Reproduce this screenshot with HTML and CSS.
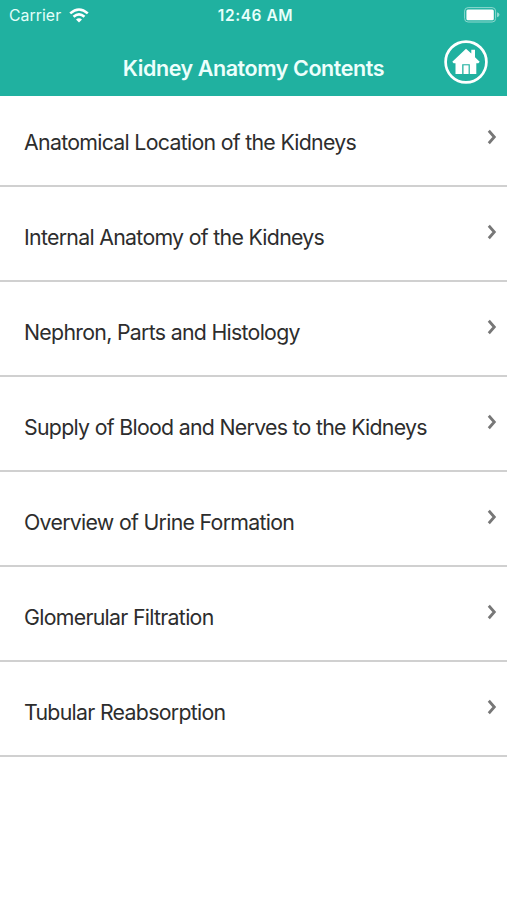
FILE: index.html
```html
<!DOCTYPE html>
<html lang="en">
<head>
<meta charset="utf-8">
<title>Kidney Anatomy Contents</title>
<link rel="stylesheet" href="styles.css">
</head>
<body>
<header class="header">
  <div class="status">
    <div class="carrier"><span>Carrier</span>
      <svg class="wifi" viewBox="0 0 20 15" fill="none" stroke="#fff" stroke-width="2.6"><path d="M1.2 5.4Q10-2.4 18.8 5.4M4.5 8.8Q10 4 15.5 8.8"/><path d="M7 11.5Q10 9 13 11.5L10 14.5Z" fill="#fff" stroke="none"/></svg>
    </div>
    <span class="time">12:46 AM</span>
    <svg class="battery" viewBox="0 0 36 16"><rect x=".6" y=".6" width="31" height="14.4" rx="3.5" fill="none" stroke="#8ed9cf"/><rect x="2.4" y="2.4" width="27.4" height="10.8" rx="1.5" fill="#fff"/><path d="M33 5.3Q35.5 6 35.5 7.8T33 10.3Z" fill="#8ed9cf"/></svg>
  </div>
  <div class="nav">
    <h1 class="title">Kidney Anatomy Contents</h1>
    <a class="home" href="#" aria-label="Home">
      <svg viewBox="0 0 44 44"><circle cx="22" cy="22" r="20.4" fill="none" stroke="#fff" stroke-width="2.7"/><path fill="#fff" d="M8.3 21.7 22 8.7 27.3 13.6V9.7H31V17.2L35.7 21.7 34.4 23.3H32.3V34H25.8V24.3H18.2V34H11.5V23.3H9.6Z"/><path fill="#fff" d="M19.5 25.3H24.6V34H19.5Z"/></svg>
    </a>
  </div>
</header>
<ul class="list">
  <li class="row"><span class="label">Anatomical Location of the Kidneys</span><svg class="chevron" viewBox="0 0 10 16"><path d="M1.8 1.8 7.3 8 1.8 14.2"/></svg></li>
  <li class="row"><span class="label">Internal Anatomy of the Kidneys</span><svg class="chevron" viewBox="0 0 10 16"><path d="M1.8 1.8 7.3 8 1.8 14.2"/></svg></li>
  <li class="row"><span class="label">Nephron, Parts and Histology</span><svg class="chevron" viewBox="0 0 10 16"><path d="M1.8 1.8 7.3 8 1.8 14.2"/></svg></li>
  <li class="row"><span class="label">Supply of Blood and Nerves to the Kidneys</span><svg class="chevron" viewBox="0 0 10 16"><path d="M1.8 1.8 7.3 8 1.8 14.2"/></svg></li>
  <li class="row"><span class="label">Overview of Urine Formation</span><svg class="chevron" viewBox="0 0 10 16"><path d="M1.8 1.8 7.3 8 1.8 14.2"/></svg></li>
  <li class="row"><span class="label">Glomerular Filtration</span><svg class="chevron" viewBox="0 0 10 16"><path d="M1.8 1.8 7.3 8 1.8 14.2"/></svg></li>
  <li class="row"><span class="label">Tubular Reabsorption</span><svg class="chevron" viewBox="0 0 10 16"><path d="M1.8 1.8 7.3 8 1.8 14.2"/></svg></li>
</ul>
</body>
</html>
```
FILE: styles.css
```css
* { box-sizing: border-box; }
body { margin: 0; min-height: 900px; background: #fff; font-family: Inter, sans-serif; color: #2d2d2d; }
svg { display: block; flex: none; }
.header { height: 96px; background: #20b1a0; color: #fff; }
.status { height: 30px; display: grid; grid-template-columns: 1fr auto 1fr; align-items: center; padding: 0 7px 0 9px; }
.carrier { display: flex; align-items: center; gap: 8px; font-size: 15.8px; letter-spacing: 0.05px; color: #e3fffa; }
.wifi { width: 20px; height: 15px; }
.time { margin-left: 2px; font-size: 15.5px; font-weight: 600; letter-spacing: 0.55px; color: #e8fffb; }
.battery { width: 36px; height: 16px; justify-self: end; }
.nav { height: 66px; display: grid; grid-template-columns: 1fr auto 1fr; align-items: start; padding: 10px 19px 0; }
.title { grid-column: 2; margin: 14px 0 0; font-size: 21.5px; line-height: 28px; font-weight: 600; letter-spacing: -0.43px; white-space: nowrap; color: #edfffc; }
.home { justify-self: end; width: 44px; height: 44px; }
.list { list-style: none; margin: 0; padding: 0; }
.row { height: 95px; display: flex; justify-content: space-between; align-items: flex-start; padding: 36px 10px 0 24px; border-bottom: 2px solid #d0d0d0; }
.row:first-child { height: 91px; padding-top: 32px; }
.label { font-size: 21.3px; line-height: 28px; letter-spacing: -0.7px; white-space: nowrap; }
.chevron { width: 10px; height: 16px; margin-top: 1px; fill: none; stroke: #777; stroke-width: 2.8; }
```
